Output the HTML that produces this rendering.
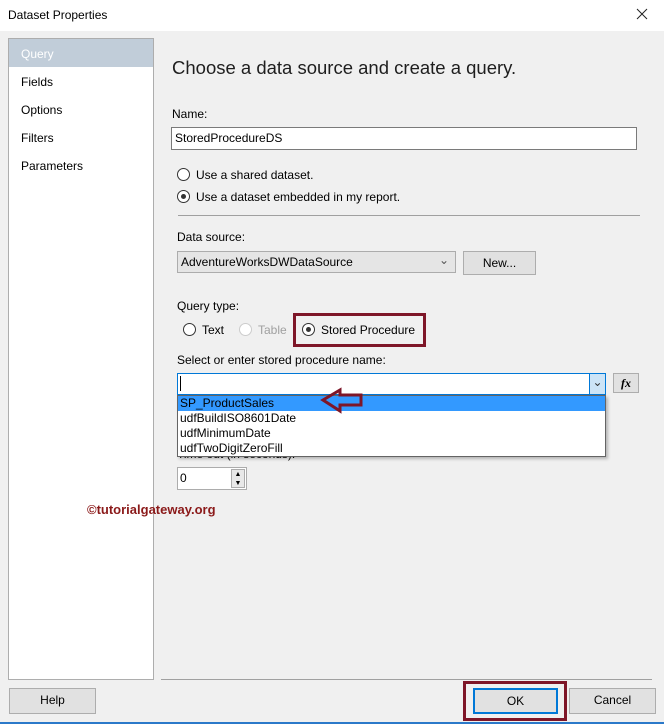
<!DOCTYPE html>
<html><head><style>
*{box-sizing:border-box}
body{margin:0;width:664px;height:724px;background:#f0f0f0;font-family:"Liberation Sans",sans-serif;font-size:12px;color:#000;position:relative;overflow:hidden}
.a{position:absolute}
.rad{position:absolute;width:13px;height:13px;border:1px solid #333;border-radius:50%;background:#fff}
.rad.on::after{content:"";position:absolute;left:3px;top:3px;width:5px;height:5px;border-radius:50%;background:#333}
.btn{position:absolute;background:#e1e1e1;border:1px solid #adadad;text-align:center;line-height:23px}
</style></head><body>
<div class="a" style="left:0;top:0;width:664px;height:31px;background:#fff"></div>
<div class="a" style="left:8px;top:8px">Dataset Properties</div>
<svg class="a" style="left:636px;top:8px" width="12" height="12"><path d="M1 1L11 11M11 1L1 11" stroke="#222" stroke-width="1"/></svg>
<div class="a" style="left:8px;top:38px;width:146px;height:642px;background:#fff;border:1px solid #adadad"></div>
<div class="a" style="left:9px;top:39px;width:144px;height:28px;background:#c1cdd9"></div>
<div class="a" style="left:21px;top:47px;color:#fff">Query</div>
<div class="a" style="left:21px;top:75px">Fields</div>
<div class="a" style="left:21px;top:103px">Options</div>
<div class="a" style="left:21px;top:131px">Filters</div>
<div class="a" style="left:21px;top:159px">Parameters</div>
<div class="a" style="left:172px;top:57px;font-size:18.5px;color:#1e1e1e">Choose a data source and create a query.</div>
<div class="a" style="left:172px;top:107px">Name:</div>
<div class="a" style="left:171px;top:127px;width:466px;height:23px;background:#fff;border:1px solid #7a7a7a;padding:3px 3px">StoredProcedureDS</div>
<div class="rad" style="left:177px;top:168px"></div><div class="a" style="left:196px;top:168px">Use a shared dataset.</div>
<div class="rad on" style="left:177px;top:190px"></div><div class="a" style="left:196px;top:190px">Use a dataset embedded in my report.</div>
<div class="a" style="left:178px;top:215px;width:462px;height:1px;background:#a0a0a0"></div>
<div class="a" style="left:177px;top:230px">Data source:</div>
<div class="a" style="left:177px;top:251px;width:279px;height:22px;background:#e5e5e5;border:1px solid #acacac;padding:3px 3px">AdventureWorksDWDataSource<span style="position:absolute;right:6px;top:1px;color:#555">⌄</span></div>
<div class="btn" style="left:463px;top:251px;width:73px;height:24px">New...</div>
<div class="a" style="left:177px;top:299px">Query type:</div>
<div class="rad" style="left:183px;top:323px"></div><div class="a" style="left:202px;top:323px">Text</div>
<div class="rad" style="left:239px;top:323px;border-color:#ccc"></div><div class="a" style="left:258px;top:323px;color:#a0a0a0">Table</div>
<div class="a" style="left:293px;top:313px;width:133px;height:34px;border:3px solid #7e1628"></div>
<div class="rad on" style="left:302px;top:323px"></div><div class="a" style="left:321px;top:323px">Stored Procedure</div>
<div class="a" style="left:177px;top:353px">Select or enter stored procedure name:</div>
<div class="a" style="left:177px;top:447px">Time out (in seconds):</div>
<div class="a" style="left:177px;top:373px;width:429px;height:22px;background:#fff;border:1px solid #0078d7"></div>
<div class="a" style="left:180px;top:376px;width:1px;height:15px;background:#000"></div>
<div class="a" style="left:589px;top:374px;width:16px;height:20px;background:#cce4f7;border-left:1px solid #0078d7;text-align:center;color:#333;line-height:16px">⌄</div>
<div class="btn" style="left:613px;top:373px;width:26px;height:20px;font-family:'Liberation Serif',serif;font-style:italic;font-weight:bold;line-height:18px">fx</div>
<div class="a" style="left:177px;top:395px;width:429px;height:62px;background:#fff;border:1px solid #646464;box-shadow:2px 2px 3px rgba(0,0,0,.25)"></div>
<div class="a" style="left:178px;top:396px;width:427px;height:15px;background:#3399ff"></div>
<div class="a" style="left:180px;top:396px;line-height:15px;color:#000">SP_ProductSales<br>udfBuildISO8601Date<br>udfMinimumDate<br>udfTwoDigitZeroFill</div>
<svg class="a" style="left:320px;top:387px" width="44" height="28"><path d="M3 13 L20 3 L20 8 L41 8 L41 18 L20 18 L20 24 Z" fill="none" stroke="#7e1628" stroke-width="3"/></svg>
<div class="a" style="left:177px;top:467px;width:70px;height:23px;background:#fff;border:1px solid #acacac;padding:3px 2px">0</div>
<div class="a" style="left:231px;top:469px;width:14px;height:19px;background:#e8e8e8;border:1px solid #acacac;font-size:7px;text-align:center;line-height:9px">▲<br>▼</div>
<div class="a" style="left:87px;top:502px;font-size:13px;font-weight:bold;color:#8b1a1a">©tutorialgateway.org</div>
<div class="a" style="left:161px;top:679px;width:491px;height:1px;background:#a0a0a0"></div>
<div class="btn" style="left:9px;top:688px;width:87px;height:26px">Help</div>
<div class="a" style="left:463px;top:681px;width:104px;height:40px;border:3px solid #7e1628"></div>
<div class="btn" style="left:473px;top:688px;width:85px;height:26px;border:2px solid #0078d7;line-height:22px">OK</div>
<div class="btn" style="left:569px;top:688px;width:87px;height:26px">Cancel</div>
<div class="a" style="left:0;top:722px;width:664px;height:2px;background:#2b79c9"></div>
</body></html>
